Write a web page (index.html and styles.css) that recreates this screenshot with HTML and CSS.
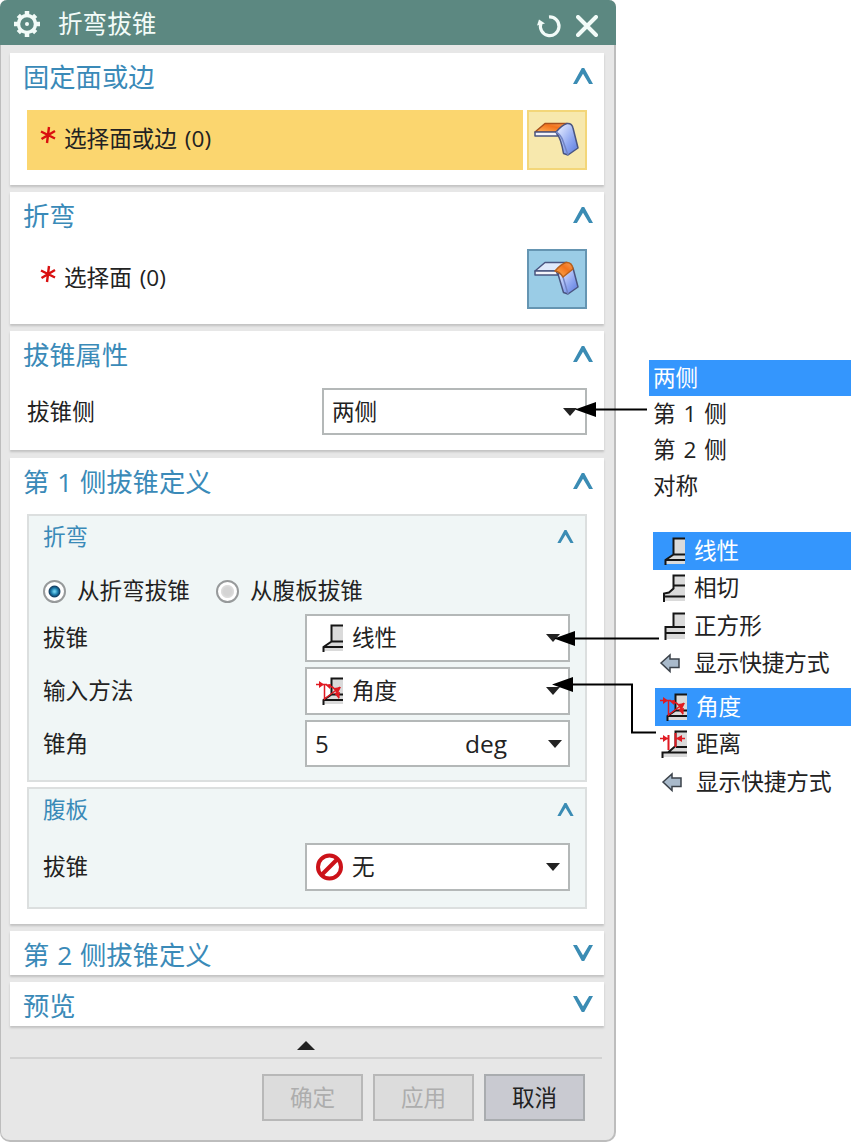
FILE: index.html
```html
<!DOCTYPE html>
<html lang="zh-CN">
<head>
    <meta charset="UTF-8">
    <meta name="viewport" content="width=device-width, initial-scale=1.0">
    <title>折弯拔锥</title>
    <link rel="stylesheet" href="styles.css">
</head>
<body>
    <!-- 公用图标 -->
    <svg class="sprite" width="0" height="0">
        <defs>
            <linearGradient id="blue" x1="0" y1="0" x2="1" y2="1">
                <stop offset="0.1" stop-color="#e4ebff"/>
                <stop offset="0.6" stop-color="#8ea6f0"/>
                <stop offset="1" stop-color="#5878dc"/>
            </linearGradient>
            <linearGradient id="orange" x1="0" y1="1" x2="1" y2="0">
                <stop offset="0" stop-color="#ffb55c"/>
                <stop offset="0.6" stop-color="#f2731c"/>
                <stop offset="1" stop-color="#f8a25c"/>
            </linearGradient>
        </defs>
        <symbol id="up" viewBox="0 0 20 16">
            <path d="M0 16L8.800 0h2.400L20 16h-3.900L10 5.800 3.900 16z" fill="#3b8cb4"/>
        </symbol>
        <symbol id="linear" viewBox="0 0 28 28">
            <path d="M16.500 1.500H28V27H8.500V23L16.500 17z" fill="#dadada"/>
            <path d="M28 1.500H16.500V17.500L8.500 23V28M16 17.500H28M8.500 23H28" fill="none" stroke="#151515" stroke-width="2"/>
        </symbol>
        <symbol id="tangent" viewBox="0 0 28 28">
            <path d="M16.500 1.500H28V27H7V20L16.500 15z" fill="#dadada"/>
            <path d="M28 1.500H16.500V14.500L12 18.500 7 19.500V28M17 11.500H28M7 22.500H28" fill="none" stroke="#151515" stroke-width="2"/>
        </symbol>
        <symbol id="square" viewBox="0 0 28 28">
            <path d="M16.500 1.500H28V27H8.500V15H16.500z" fill="#dadada"/>
            <path d="M28 1.500H16.500V15H8.500V28M16 15H28M8.500 21H28" fill="none" stroke="#151515" stroke-width="2"/>
        </symbol>
        <symbol id="angle" viewBox="0 0 28 28">
            <path d="M16.500 1.500H28V27H8.500V23L16.500 17z" fill="#dadada"/>
            <path d="M28 1.500H16.500V17.500L8.500 23V28M16 17.500H28M8.500 23H28" fill="none" stroke="#151515" stroke-width="2"/>
            <path d="M1 7.500H12M9.500 7V22L25 10M14 8.500Q22 11 24 21" fill="none" stroke="#e01a22" stroke-width="1.500"/>
            <path d="M4 4L9 7.500 4 11zM16 7l-6 .5 5 4.500zM19 11l7-1-3 6zM19 16l5 6 1-7z" fill="#e01a22"/>
        </symbol>
        <symbol id="distance" viewBox="0 0 28 28">
            <path d="M16.500 1.500H28V27H4V23L16.500 17z" fill="#dadada"/>
            <path d="M28 1.500H16.500V16L9 22.500H3.500V28M17 17H28M3.500 22.500H28" fill="none" stroke="#151515" stroke-width="2"/>
            <path d="M9.500 5V20M16.500 3V17" stroke="#e01a22" stroke-width="2"/>
            <path d="M1 8.500H9M17 8.500H26" stroke="#e01a22" stroke-width="1.500"/>
            <path d="M4 5L9 8.500 4 12zM23 5l-6 3.500 6 3.500z" fill="#e01a22"/>
        </symbol>
        <symbol id="shortcut" viewBox="0 0 28 28">
            <path d="M4 14L13 6V10H22V18.500H13V22.500z" fill="#a9bacb" stroke="#3c434b" stroke-width="1.500"/>
        </symbol>
        <symbol id="star" viewBox="0 0 16 18">
            <path d="M9 1L7 17M1 5.500L15 12.500M15 5L1.500 13" stroke="#d90f0f" stroke-width="2.400"/>
        </symbol>
    </svg>

    <div class="dialog">
        <div class="titlebar">
            <svg class="gear" width="26" height="26" viewBox="0 0 26 26">
                <path d="M13 0V4M13 22V26M0 13H4M22 13H26M4.300 4.300L7 7M19 19L21.700 21.700M21.700 4.300L19 7M7 19L4.300 21.700" stroke="#f2fbf8" stroke-width="4.500"/>
                <circle cx="13" cy="13" r="8.500" fill="none" stroke="#f2fbf8" stroke-width="3.400"/>
                <circle cx="13" cy="13" r="2" fill="#f2fbf8"/>
            </svg>
            <h1>折弯拔锥</h1>
            <svg class="reset" width="24" height="24" viewBox="0 0 24 24">
                <path d="M12 3A9.300 9.300 0 1 1 4 9" fill="none" stroke="#f2fbf8" stroke-width="3.200"/>
                <path d="M0 11.500L2 5.500 8 9.500z" fill="#f2fbf8"/>
            </svg>
            <svg class="close" width="22" height="22" viewBox="0 0 22 22">
                <path d="M2 2L20 20M20 2L2 20" stroke="#f2fbf8" stroke-width="4" stroke-linecap="round"/>
            </svg>
        </div>

        <div class="panels">
            <section class="panel">
                <h2>固定面或边<svg class="chevron"><use href="#up"/></svg></h2>
                <div class="pick-row active">
                    <div class="pick-label"><svg class="star"><use href="#star"/></svg>选择面或边 (0)</div>
                    <div class="pick-button">
                        <svg width="56" height="56" viewBox="2 2 56 56" stroke="#4a5580" stroke-width="1.500" stroke-linejoin="round">
                            <path d="M8 22L18 13.500H40L30 22z" fill="url(#orange)" stroke="#a8501c"/>
                            <path d="M8 22H29L31 26H8z" fill="#f4f4fa"/>
                            <path d="M29 22Q35 15 40 13.500Q45 13 46 18L51 38 41 45 36.500 43.500Q34 28 29 22z" fill="url(#blue)"/>
                            <path d="M29 22Q34 25 36 31L41 45" fill="none" stroke="#7284c4"/>
                        </svg>
                    </div>
                </div>
            </section>

            <section class="panel">
                <h2>折弯<svg class="chevron"><use href="#up"/></svg></h2>
                <div class="pick-row">
                    <div class="pick-label"><svg class="star"><use href="#star"/></svg>选择面 (0)</div>
                    <div class="pick-button">
                        <svg width="56" height="56" viewBox="2 2 56 56" stroke="#4a5580" stroke-width="1.500" stroke-linejoin="round">
                            <path d="M8 22L18 13.500H40L30 22z" fill="#dfe9fb"/>
                            <path d="M8 22H29L31 26H8z" fill="#f4f4fa"/>
                            <path d="M31 25L46 19 51 38 41 45 36.500 43.500z" fill="url(#blue)"/>
                            <path d="M36 28L41 45" stroke="#7284c4"/>
                            <path d="M28 22Q34 15 39 13.500Q45 13 46 20L36 28Q33 23 28 22z" fill="url(#orange)" stroke="#b8601c"/>
                        </svg>
                    </div>
                </div>
            </section>

            <section class="panel side-panel">
                <h2>拔锥属性<svg class="chevron"><use href="#up"/></svg></h2>
                <div class="field">
                    <span>拔锥侧</span>
                    <div class="select short">两侧<i class="caret"></i></div>
                </div>
            </section>

            <section class="panel define-panel">
                <h2>第 1 侧拔锥定义<svg class="chevron"><use href="#up"/></svg></h2>
                <div class="group">
                    <h3>折弯<svg class="chevron"><use href="#up"/></svg></h3>
                    <div class="radios">
                        <label><i class="radio checked"></i>从折弯拔锥</label>
                        <label><i class="radio"></i>从腹板拔锥</label>
                    </div>
                    <div class="field">
                        <span>拔锥</span>
                        <div class="select"><svg class="icon"><use href="#linear"/></svg>线性<i class="caret"></i></div>
                    </div>
                    <div class="field">
                        <span>输入方法</span>
                        <div class="select"><svg class="icon"><use href="#angle"/></svg>角度<i class="caret"></i></div>
                    </div>
                    <div class="field">
                        <span>锥角</span>
                        <div class="select short value"><b>5</b><em>deg</em><i class="caret"></i></div>
                    </div>
                </div>
                <div class="group web">
                    <h3>腹板<svg class="chevron"><use href="#up"/></svg></h3>
                    <div class="field">
                        <span>拔锥</span>
                        <div class="select">
                            <svg class="icon none" viewBox="0 0 28 28">
                                <circle cx="14.500" cy="14" r="11.500" fill="#fff" stroke="#cc1219" stroke-width="4"/>
                                <path d="M7 21.500L22 6.500" stroke="#cc1219" stroke-width="4"/>
                            </svg>无<i class="caret"></i>
                        </div>
                    </div>
                </div>
            </section>

            <section class="panel closed">
                <h2>第 2 侧拔锥定义<svg class="chevron"><use href="#up"/></svg></h2>
            </section>

            <section class="panel closed">
                <h2>预览<svg class="chevron"><use href="#up"/></svg></h2>
            </section>
        </div>

        <div class="fold"><i></i></div>
        <div class="buttons">
            <button disabled>确定</button>
            <button disabled>应用</button>
            <button>取消</button>
        </div>
    </div>

    <!-- 展开的下拉列表 -->
    <div class="menus">
        <ul class="menu sides">
            <li class="selected">两侧</li>
            <li>第 1 侧</li>
            <li>第 2 侧</li>
            <li>对称</li>
        </ul>
        <ul class="menu shapes">
            <li class="selected"><svg class="icon"><use href="#linear"/></svg>线性</li>
            <li><svg class="icon"><use href="#tangent"/></svg>相切</li>
            <li><svg class="icon"><use href="#square"/></svg>正方形</li>
            <li><svg class="icon"><use href="#shortcut"/></svg>显示快捷方式</li>
        </ul>
        <ul class="menu methods">
            <li class="selected"><svg class="icon"><use href="#angle"/></svg>角度</li>
            <li><svg class="icon"><use href="#distance"/></svg>距离</li>
            <li><svg class="icon"><use href="#shortcut"/></svg>显示快捷方式</li>
        </ul>
    </div>

    <!-- 指向下拉框的引线 -->
    <svg class="leaders" width="853" height="1147" viewBox="0 0 853 1147">
        <path d="M590 409.500H647M570 638.500H659M570 684.500H632V732.500H656" fill="none" stroke="#000" stroke-width="2"/>
        <path d="M575 409.500L596 402V417zM554 638.500L575 631V646zM552 684.500L573 677V692z"/>
    </svg>
</body>
</html>
```

FILE: styles.css
```css
* {
    box-sizing: border-box;
}

body {
    margin: 0;
    width: 853px;
    height: 1147px;
    display: flex;
    align-items: flex-start;
    position: relative;
    overflow: hidden;
    background: #fff;
    color: #222;
    font-family: "Open Sans", "Noto Sans CJK SC", sans-serif;
    font-size: 22.6px;
    line-height: 30px;
    word-spacing: 2px;
}

h1, h2, h3, ul {
    margin: 0;
    padding: 0;
    font-weight: normal;
}

.sprite {
    position: absolute;
}

/* 对话框 */
.dialog {
    width: 616px;
    height: 1142px;
    flex: none;
    background: #e7e7e7;
    border: solid #bdbdbd;
    border-width: 0 2px 2px 1px;
    border-radius: 7px 7px 10px 10px;
}

.titlebar {
    height: 45px;
    margin: 0 -2px 0 -1px;
    padding: 3px 18px 0 14px;
    display: flex;
    align-items: center;
    background: #5c8881;
    border-radius: 7px 7px 0 0;
}

.titlebar h1 {
    flex: 1;
    margin: 0 0 0 18px;
    color: #f2fbf8;
    font-size: 24.6px;
}

.titlebar .reset {
    margin: 4px 15px 0 0;
}

.titlebar .close {
    margin-top: 4px;
}

.panels {
    padding: 8px 9px 0;
    display: flex;
    flex-direction: column;
    gap: 7px;
}

.panel {
    width: 594px;
    padding: 0 17px 15px;
    background: #fff;
    box-shadow: 0 2px 2px #c2c2c2;
}

h2 {
    height: 43px;
    margin: 0 -6px 14px -4px;
    padding-top: 5px;
    display: flex;
    align-items: center;
    justify-content: space-between;
    color: #3a8ab8;
    font-size: 26.3px;
    word-spacing: 1px;
}

.chevron {
    width: 20px;
    height: 16px;
    margin-top: -2px;
}

.side-panel {
    margin-bottom: 1px;
}

.define-panel h2 {
    margin-bottom: 13px;
}

.closed {
    padding-bottom: 1px;
}

.closed h2 {
    margin-bottom: 0;
}

.closed .chevron {
    margin-top: -5px;
    transform: rotate(180deg);
}

/* 选择行 */
.pick-row {
    height: 60px;
    display: flex;
    gap: 4px;
}

.pick-label {
    flex: 1;
    padding: 0 0 2px 13px;
    display: flex;
    align-items: center;
}

.star {
    width: 16px;
    height: 18px;
    margin: -8px 8px 0 0;
}

.pick-button {
    width: 60px;
    border: 2px solid #6595b2;
    background: #9acce6;
}

.active .pick-label {
    background: #fbd66f;
}

.active .pick-button {
    border-color: #f3d679;
    background: #f7e8ad;
}

/* 字段与下拉框 */
.field {
    display: flex;
    justify-content: space-between;
    align-items: center;
}

.select {
    width: 265px;
    height: 48px;
    padding: 0 8px;
    display: flex;
    align-items: center;
    background: #fff;
    border: 2px solid #b4b8b8;
}

.short {
    height: 47px;
}

.caret {
    margin-left: auto;
    border: solid transparent;
    border-width: 8px 7.5px 0;
    border-top-color: #222;
}

.icon {
    width: 28px;
    height: 28px;
    margin-right: 9px;
    flex: none;
}

.group {
    height: 268px;
    padding: 0 15px 0 14px;
    background: #f0f6f6;
    border: 2px solid #dcdfdf;
}

.group .field {
    margin-bottom: 5px;
}

.group h3 {
    height: 41px;
    margin-right: -4px;
    display: flex;
    align-items: center;
    justify-content: space-between;
    color: #3a8ab8;
    font-size: 22.6px;
}

.group .chevron {
    width: 17px;
    height: 13px;
    margin-top: 0;
}

.web {
    height: 122px;
    margin-top: 5px;
}

.web h3 {
    margin-bottom: 13px;
}

.radios {
    height: 57px;
    padding-top: 11px;
    display: flex;
    align-items: center;
    gap: 26px;
}

.radios label {
    display: flex;
    align-items: center;
}

.radio {
    width: 23px;
    height: 23px;
    margin-right: 11px;
    border: 2px solid #979a9b;
    border-radius: 50%;
    background: radial-gradient(circle, #d4d4d4 0 30%, #dedede 46%, #fff 52%);
}

.checked {
    background: radial-gradient(circle, #6fd0ee 0 5%, #1c7cac 25%, #123e62 40%, #fff 48%);
}

.value b {
    width: 150px;
    font-weight: normal;
    font-size: 24px;
}

.value em {
    font-style: normal;
    font-size: 24.5px;
}

.value .caret {
    margin-right: -2px;
}

/* 底部 */
.fold {
    height: 33px;
    margin: 0 12px 0 9px;
    padding-top: 15px;
    display: flex;
    justify-content: center;
    border-bottom: 2px solid #d2d2d2;
}

.fold i {
    width: 0;
    height: 9px;
    border: solid transparent;
    border-width: 0 9px 9px;
    border-bottom-color: #222;
}

.buttons {
    margin: 15px 29px 0 0;
    display: flex;
    justify-content: flex-end;
    gap: 10px;
}

.buttons button {
    width: 101px;
    height: 47px;
    padding: 0;
    border: 2px solid #a9acaf;
    background: #c9cad1;
    color: #222;
    font: inherit;
}

.buttons button:disabled {
    border-color: #b8b8b8;
    background: #dcdcdc;
    color: #adadad;
}

/* 列表 */
.menus {
    width: 202px;
    margin: 360px 0 0 33px;
}

.menu {
    list-style: none;
}

.menu li {
    height: 37.5px;
    padding-left: 4px;
    display: flex;
    align-items: center;
    white-space: nowrap;
}

.menu .selected {
    background: #3496fd;
    color: #fff;
}

.sides li {
    height: 36px;
    padding-bottom: 1px;
}

.shapes {
    margin: 28px 0 6px 4px;
}

.methods {
    margin-left: 6px;
}

.leaders {
    position: absolute;
    left: 0;
    top: 0;
}
```
